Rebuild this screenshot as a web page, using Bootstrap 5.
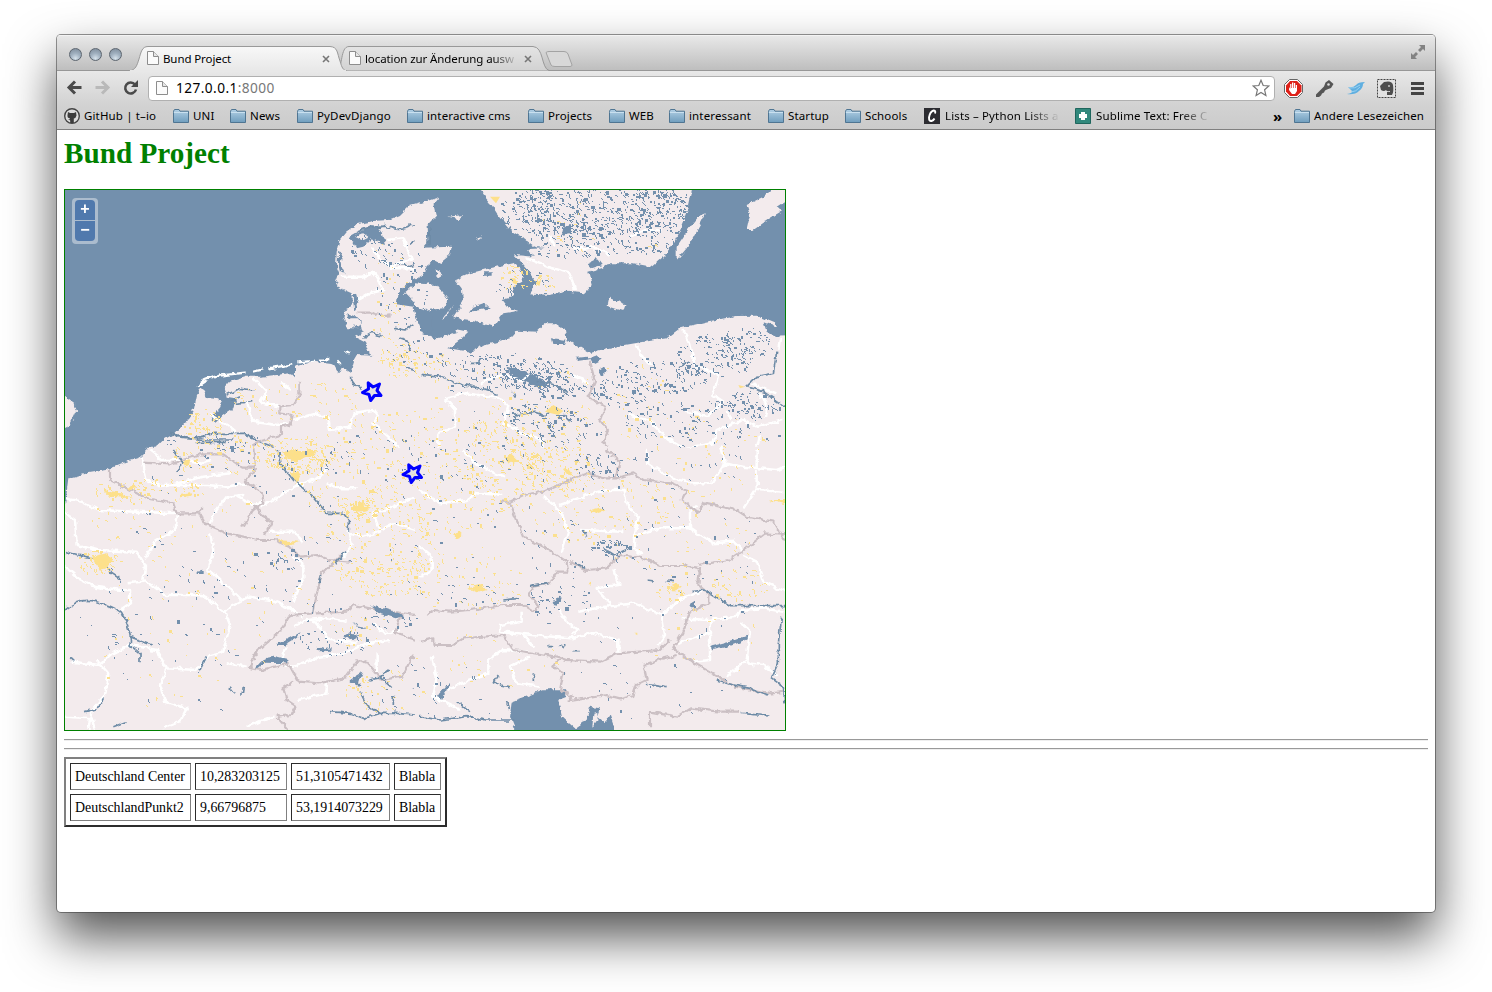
<!DOCTYPE html>
<html lang="de">
<head>
<meta charset="utf-8">
<title>Bund Project</title>
<link href="https://cdn.jsdelivr.net/npm/bootstrap@5.3.0/dist/css/bootstrap.min.css" rel="stylesheet">
<script src="https://cdn.jsdelivr.net/npm/bootstrap@5.3.0/dist/js/bootstrap.bundle.min.js"></script>
<style>
body{background:#fff;overflow:hidden;height:992px;color:#000}
svg{display:block;flex:none}
.browser{width:1378px;height:877px;margin:35px 0 0 57px;border-radius:4px;background:#fff;box-shadow:0 0 0 1px rgba(60,60,60,.55),0 25px 50px rgba(0,0,0,.68);overflow:hidden}
.chrome-ui{font-family:"Noto Sans",sans-serif;font-size:11.5px;line-height:16px;white-space:nowrap}
.strip{height:36px;background:linear-gradient(#e9e9e9,#bdbdbd);box-shadow:inset 0 1px #f3f3f3}
.strip-shapes{left:0;top:0}
.lights{width:90px;padding:13px 0 0 12px;gap:7px}
.light{width:13px;height:13px;border-radius:50%;border:1px solid #5d6670;background:radial-gradient(circle at 50% 85%,#d7e3ec 0,#a1b1c0 45%,#7b8998 100%)}
.tab-a{width:202px;padding-top:16px}
.tab-b{width:190px;padding-top:16px}
.tab-label{margin-left:4px;width:155px;letter-spacing:-.1px}
.fade-a{-webkit-mask-image:linear-gradient(90deg,#000 82%,transparent 99%)}
.toolbar-row{height:34px;background:linear-gradient(#e8e8e8,#d2d2d2)}
.omni{width:1127px;height:25px;margin-left:9px;border:1px solid #b0b0b0;border-radius:4px;background:#fff;padding:0 4px 0 7px;font-size:13.7px;letter-spacing:.42px}
.omni .rest{color:#777}
.marks{height:25px;background:linear-gradient(#d2d2d2,#cbcbcb);border-bottom:1px solid #808080;display:grid;grid-template-columns:109px 57px 67px 110px 121px 81px 60px 99px 77px 79px 151px 198px 21px 1fr;padding:0 0 2px 7px;align-items:center;letter-spacing:.14px}
.bm{display:flex;align-items:center;gap:4px}
.bm b{font-size:15px;line-height:10px}
.fade-b{gap:5px}
.fade-b span{width:116px;-webkit-mask-image:linear-gradient(90deg,#000 72%,transparent 99%)}
.page-body{padding:6px 7px 0;font-family:"Liberation Serif",serif;font-size:13.9px;line-height:16px}
.page-body h1{font-size:29.2px;line-height:34px;font-weight:bold;color:green;margin:0 0 19px}
.map-box{width:722px;height:542px;border:1px solid green}
.zoomer{left:7px;top:8px;width:26px;height:46px;padding:2px 3px;background:rgba(255,255,255,.4);border-radius:4px;gap:1px;font:bold 16px/18px "Liberation Sans",sans-serif}
.zoomer span{width:20px;height:20px;background:#5079ad;color:#fff;text-align:center}
.zoomer span:first-child{border-radius:4px 4px 0 0}
.zoomer span:last-child{border-radius:0 0 4px 4px}
.rule{height:2px;border-top:1px solid #999;border-bottom:1px solid #eee;margin-bottom:7px}
.places{width:383px;border:2px solid;border-color:#808080 #2d2d2d #2d2d2d #808080;border-collapse:separate;border-spacing:4px;table-layout:fixed}
.places td{height:27px;padding:1px 0 0 4px;border:1px solid;border-color:#2c2c2c #808080 #808080 #2c2c2c;white-space:nowrap}
.l{fill:#f3ebed}
.w{fill:#7390ad}
.wb{fill:none;stroke:#fff;stroke-width:7.5;stroke-linejoin:round}
.nb{fill:none;stroke:#cbc0c4;stroke-width:6.5;stroke-linejoin:round}
.rv{fill:none;stroke:#6d8ba6;stroke-width:5;stroke-linejoin:round}
.y{fill:#fde08a}
</style>
</head>
<body>
<svg width="0" height="0" class="position-absolute">
<defs>
<linearGradient id="fg" x2="0" y2="1"><stop stop-color="#b2d0e5"/><stop offset="1" stop-color="#6f9dbd"/></linearGradient>
<linearGradient id="t1" x2="0" y2="1"><stop stop-color="#f8f8f8"/><stop offset="1" stop-color="#e8e8e8"/></linearGradient>
<linearGradient id="t2" x2="0" y2="1"><stop stop-color="#e4e4e4"/><stop offset="1" stop-color="#d2d2d2"/></linearGradient>
<symbol id="folder" viewBox="0 0 16 14"><path d="M.5 3.5V2.2L1.5.5H6l1 1.7h8.5v11.3H.5z" fill="url(#fg)" stroke="#4f7592"/><path d="M1 3.5h14" stroke="#c9e0ef"/></symbol>
<symbol id="sheet" viewBox="0 0 12 14"><path d="M.5.5h6l5 5v8H.5z" fill="#fbfbfb" stroke="#8d8d8d"/><path d="M6.5.5v5h5" fill="#e6e6e6" stroke="#8d8d8d"/></symbol>
<symbol id="cross" viewBox="0 0 8 8"><path d="M1 1l6 6M7 1L1 7" stroke="#777" stroke-width="1.6"/></symbol>
</defs>
</svg>
<div class="browser">
<div class="chrome-ui">
 <div class="strip d-flex position-relative">
  <svg class="strip-shapes position-absolute" width="1378" height="36">
   <path d="M0 35.5H1378" stroke="#979797"/>
   <path d="M280 35.5C286 33 283 11.500 292 11.500H476C487 12 484 33 492 35.500" fill="url(#t2)" stroke="#999"/>
   <path d="M72 36C79 35 80 30 82 24C84 17 85 11.500 91 11.500H273C281 12 280 18 283 26C285 33 286 35 290 36" fill="url(#t1)" stroke="#999"/>
   <path d="M73 36H289" stroke="#e8e8e8" stroke-width="2"/>
   <path d="M489 17.500Q490 16.500 492 16.500H507Q510 16.500 511 19L515 30Q515 31.500 513 31.500H498Q495 31.500 494 30Z" fill="#d8d8d8" stroke="#a3a3a3"/>
   <path d="M1368 10v6l-2-2-3 3-2-2 3-3-2-2zM1354 24v-6l2 2 3-3 2 2-3 3 2 2z" fill="#828282"/>
  </svg>
  <div class="lights d-flex position-relative"><i class="light"></i><i class="light"></i><i class="light"></i></div>
  <div class="tab-a d-flex position-relative"><svg width="12" height="14" class="mt-0"><use href="#sheet"/></svg><span class="tab-label">Bund Project</span><svg width="8" height="8" class="mt-1 ms-1"><use href="#cross"/></svg></div>
  <div class="tab-b d-flex position-relative"><svg width="12" height="14"><use href="#sheet"/></svg><span class="tab-label fade-a">location zur Änderung ausw</span><svg width="8" height="8" class="mt-1 ms-1"><use href="#cross"/></svg></div>
 </div>
 <div class="toolbar-row d-flex align-items-center">
  <svg width="82" height="24" viewBox="57 77 82 24" fill="none"><path d="M81.500 88.500H70M75 82.500l-6 6 6 6" stroke="#4a4a4a" stroke-width="3"/><path d="M95.500 88.500H107M102 82.500l6 6-6 6" stroke="#b9b9b9" stroke-width="3"/><path d="M135 85.500a5.500 5.500 0 1 0 1 5" stroke="#4a4a4a" stroke-width="2.600"/><path d="M138 81v7h-7z" fill="#4a4a4a"/></svg>
  <div class="omni d-flex align-items-center"><svg width="12" height="14" class="me-2"><use href="#sheet"/></svg><span>127.0.0.1<span class="rest">:8000</span></span>
   <svg class="ms-auto" width="18" height="18" viewBox="0 0 18 18"><path d="M9 1.200l2.200 5.300 5.600.5-4.200 3.800 1.300 5.700L9 13.500l-4.900 3 1.300-5.700L1.200 7l5.600-.5z" fill="#fff" stroke="#777" stroke-width="1.200"/></svg></div>
  <svg class="ms-1" width="150" height="24" viewBox="1279 76 150 24"><path d="M1290 79.500h8l5 5v8l-5 5h-8l-5-5v-8z" transform="translate(-.5 0)" fill="#fff" stroke="#666"/><path d="M1290 81h7l4.500 4.500v6l-4.500 4.500h-7l-4-4.500v-6z" fill="#de2119"/><path d="M1289 87v3l3 4h3l2-3v-6h-1.200v3h-.6v-5h-1.300v5h-.6v-5.500h-1.300V88h-.6v-4h-1.200v5z" fill="#fff"/>
   <path d="M1316 94.500l8-8 1.500-4 3.500-2.500 4.500 4-2.500 4-4 1.500-2 1-1 2-2 1-1 2-2 1.500h-3z" fill="#555"/><circle cx="1328.500" cy="84.500" r="1.300" fill="#ddd"/>
   <path d="M1347 94q6-1 5-3l-4-4q5 1 8-2 2-3 9-3l-2 2q0 4-4 7-4 4-12 3z" fill="#60afe0"/><path d="M1349 88q6 1 11-3M1351 92q5 0 9-5" stroke="#9ad2f2" fill="none"/>
   <rect x="1377.500" y="79.500" width="18" height="18" fill="#e2e2e2" stroke="#444" stroke-dasharray="2 1"/><path d="M1380 86l4-4q8-2 9 3 1 7-1 10h-5v-3h3v-1q-3 1-4-1-2 2-5 0z" fill="#4d4d4d"/><path d="M1388 86h2" stroke="#fff"/>
   <path d="M1411 83.500h13M1411 88.500h13M1411 93.500h13" stroke="#444" stroke-width="3"/></svg>
 </div>
 <div class="marks">
  <div class="bm"><svg width="16" height="16" viewBox="0 0 16 16"><circle cx="8" cy="8" r="7.300" fill="#ddd" stroke="#444" stroke-width="1.400"/><path d="M4 4l2 1h4l2-1 .5 3.500Q12 10 9.800 10.500v4.500H6.200v-2.500L4 11l2 .2v-.7Q3 10 3.500 7z" fill="#3d3d3d"/></svg><span>GitHub | t–io</span></div>
  <div class="bm"><svg width="16" height="14"><use href="#folder"/></svg><span>UNI</span></div>
  <div class="bm"><svg width="16" height="14"><use href="#folder"/></svg><span>News</span></div>
  <div class="bm"><svg width="16" height="14"><use href="#folder"/></svg><span>PyDevDjango</span></div>
  <div class="bm"><svg width="16" height="14"><use href="#folder"/></svg><span>interactive cms</span></div>
  <div class="bm"><svg width="16" height="14"><use href="#folder"/></svg><span>Projects</span></div>
  <div class="bm"><svg width="16" height="14"><use href="#folder"/></svg><span>WEB</span></div>
  <div class="bm"><svg width="16" height="14"><use href="#folder"/></svg><span>interessant</span></div>
  <div class="bm"><svg width="16" height="14"><use href="#folder"/></svg><span>Startup</span></div>
  <div class="bm"><svg width="16" height="14"><use href="#folder"/></svg><span>Schools</span></div>
  <div class="bm fade-b"><svg width="16" height="16"><path d="M0 0h16v16H0z" fill="#2c2c31"/><path d="M11 5.500q1-3-1.500-3Q6 3.500 5 9.500q0 4 2.500 3.500 2-.5 3-2.500" fill="none" stroke="#fff" stroke-width="1.900"/></svg><span>Lists – Python Lists a</span></div>
  <div class="bm fade-b"><svg width="16" height="16"><path d="M.5.5h15v15H.5z" fill="#31887c" stroke="#1f665d"/><path d="M6 4h4v2h2v4h-2v2H6v-2H4V6h2z" fill="#fff"/></svg><span>Sublime Text: Free C</span></div>
  <div class="bm"><b>»</b></div>
  <div class="bm"><svg width="16" height="14"><use href="#folder"/></svg><span>Andere Lesezeichen</span></div>
 </div>
</div>
<main class="page-body">
<h1>Bund Project</h1>
<div class="map-box position-relative">
<svg width="720" height="540" viewBox="65 190 720 540">
<defs><filter id="rough" filterUnits="userSpaceOnUse" x="55" y="180" width="740" height="560"><feTurbulence type="fractalNoise" baseFrequency=".16" numOctaves="3" seed="4"/><feDisplacementMap in="SourceGraphic" scale="5.500" xChannelSelector="R" yChannelSelector="G"/></filter></defs>
<path class="w" d="M65 190h720v540H65z"/>
<g filter="url(#rough)">
<!-- north west: North Sea coast, Jutland -->
<g transform="translate(60 185) scale(.33333)">
<path class="l" d="M1080 52L1050 60 1020 90 985 105 940 108 890 118 858 140 838 165 830 200 828 240 838 265 825 300 860 318 875 325 875 365 855 375 850 400 862 430 890 430 915 440 885 455 915 470 925 500 940 512 890 510 878 530 870 560 845 545 835 565 820 538 760 530 705 545 705 580 690 565 650 570 600 575 560 575 510 590 493 610 500 635 530 640 520 670 490 690 465 715 455 700 485 665 475 640 440 635 425 610 412 625 400 680 375 715 345 745 310 765 290 785 258 800 230 830H1125V460L1080 445z"/>
<path class="l" d="M1040 310L1110 293V390L1065 352 1035 326z"/>
<path class="l" d="M0 625L15 635 40 655 48 680 30 720 0 735z"/>
<path d="M412 605Q430 580 480 572L560 562M580 560l30-7M625 550l75-12M715 532l50-5M780 525l25-3M832 530l10 10M860 500l10 5" fill="none" stroke="#fff" stroke-width="7"/>
<path class="w" d="M865 160L900 140 935 120 955 125 965 145 975 180 960 175 935 160 910 185 890 190 880 170zM835 195l10 15-3 30 12 25-15-8-6-30zM890 325l8 28-15 25-5-45zM860 385l40 15 5 35-20-5-5-25-20-5zM1115 220L1098 240 1098 262 1045 295 1015 325 1010 358 1060 365 1070 400 1085 435 1115 445V385L1060 350 1035 325 1060 303 1115 293z"/>
<path class="l" d="M885 155l25-10 15 10-20 10zM870 400l25 0 8 20-15 5z"/>
<path class="rv" d="M890 140Q950 115 990 128T1050 120L1095 130M1090 190l15-20M1110 130v50M1050 175l30-12M975 120l-20 10M1000 240l30-5 20 10 30-10M1005 430l30 5 25-15M910 460l25-15 30 8M1015 460l30 10 5 25M1040 550l60 12M875 575v20l30 15M500 630l40-20 40 5M510 650l30-15M525 655l55-5M330 745L400 760 465 745 550 745 600 770 650 790 660 810M350 755l90 10h80M410 772h90"/>
<path class="wb" d="M935 190l20 25 40 30 60-25-25-60-50 5M990 250l60 0 30 10M845 275h60l40-10 25 50-40 10-35 20M580 580l40 40-20 30 60 15 25-2M690 615l-30-25M560 650l20 60 70 10 35-5M700 705l70-20 35 15 5 35 60-10 10-40 60-10 15 20-15 20 45 40 35 35M450 690l50 30 30 25"/>
<path class="nb" d="M890 383l40 0 40 10 25-2M718 590l0 40-20 30-40 5v20l40 5-5 25-30 10 0 25-60 15-25 15"/>
</g>
<!-- north east: Denmark, Sweden, Pomerania -->
<g transform="translate(420 185) scale(.33333)">
<path class="l" d="M-15 60L60 35 40 60 48 95 20 125 22 175 10 188 95 185 90 210 60 235 40 225 20 240 10 270-15 285zM-15 295L50 300 85 345 70 370 20 375-15 365zM65 405L100 355 75 400zM105 285L150 265 210 250 280 235 300 250 310 290 280 305 280 335 245 345 260 365 295 378 250 385 220 425 170 410 130 405 100 395 130 350 125 310zM165 0L215 60 240 100 270 135 310 160 345 185 375 190 330 192 325 200 345 215 285 210 320 250 350 290 330 325 385 330 440 320 495 325 515 300 505 260 545 250 570 235 640 235 695 245 730 215 765 170 790 115 805 70 820 0zM770 225V185L800 140 835 95 858 85 840 120 800 190zM1115 5H1060L1030 35 980 60 990 90 980 135H1000L1050 100 1090 75 1070 65 1115 35zM565 338l52 20-7 20-50-16zM85 95l45-5-15 12zM168 160l18-3-10 8zM50 255l18 15-15 10z"/>
<path class="l" d="M-15 435L50 460 110 445 105 432 145 440 120 465 85 490 150 500 180 485 270 460 290 437 350 440 375 415 405 415 435 435 440 465 505 505 560 490 670 470 740 460 780 430 860 410 950 393 1010 392 1065 415 1068 425 1030 410 1040 440 1060 452 1125 450V830H-15z"/>
<path class="w" d="M395 460l45 5-5 15-35 0zM470 518l30-3 10 8-40 5zM510 520l20-8 15 12-25 12zM535 555l15-8 12 12-18 14zM160 365l30-10 20 15-60 10zM195 262l20 0 0 10-20 0zM260 545l60 15 55 30-15 20-45-20-50-25zM430 130l20-10 0 25-25 5zM500 235l30-15 15 20-30 10z"/>
<path class="wb" d="M390 150l10 35M320 220l60 25 70 20 15 50M460 190h70l40 20M625 155l50-20h50M650 480l20 40 25 20M790 435l20 40 15 65 70 30-15 60 30 20-45 40-70-10M1080 460l-5 35M1000 595l40 20 30 10M180 600l25-20 50-10 50 15 25-15M455 570l30 10 20 20M75 640l60-15 110 15 20 25-15 50 60 30 60 20-10 35M75 640l30 35 0 50-50 20 0 40 40 20M625 690l70 20 45 50 50 30 90-15 10-40 80-30 40 20 80-20M920 680l15 25M1020 750l-15 60M1020 625l20 30-5 40"/>
<path class="nb" d="M510 530l15 60-20 45 50 30-15 40 25 35-15 30 30 45"/>
<path class="rv" d="M0 568l60 5 50 20 60 15 60 20M1070 500l-10 65-50 10-30 30 50 15 65 45M285 690l60-8 30 10 25-15M430 690l20 20M150 535h20l15-15M280 620l5 20M780 545l30-15M350 590l60 10 30 25"/>
</g>
<!-- south west: Benelux, France, Switzerland -->
<g transform="translate(60 450) scale(.33333)">
<path class="l" d="M0 165L15 165 25 85 80 70 140 60 200 35 255 18 265-10H1125V860H0z"/>
<path class="wb" d="M15 145l50 10 50 25 110 5 130 5-10 50-60 35-30 50M15 190l30 20 5 75 60 15 120 5 25 40-5 50-50 5M15 350l40 35 50 25 80 10 25 0 0 40-30 20M255 390l60 45 110 0 70 50 25-20 50-25 60 10 60 25 40 25M450 250l10 50-15 60 70 60 30 30M495 485l15 40-20 80-40 10-40 45-90-5-30-55-80-15-60 30-30 30-85-10M320 655l-20 50 15 50 65 20-20 40-50 20M110 630l35 40-10 65-40 45-10 60M15 800l80 5 10 35M500 640l60 10M245 20l15 70 50 20 60-15 60-15 80-10M290 105h150l60 5 60-10M270 0l40 30 50 0 60 10 30-10M600 170l40-20 40-25 40-20 60-25 20-25M450 220l20-40 30-40 50-5M530 140l40 20 15 5 25-15M630 245l70 0 30 30M700 320l30 20 0 45-30 70M870 250l5 35-25 35M860 245l50 15 50-15-20-55 50-15 60-30 60-10M1110 375l-35 10 5 80-10 30M960 240l40-20 100 30M700 530l40-20 60-5 60 10M760 510l50 60 80 10M990 570l-70 10-70 30-70 10-80 30-40-10 20-50M950 610l0 60M940 520l30 30 50-10M800 700l0 30-85 20M560 830l80-30M800 100l40 15 50 0"/>
<path class="nb" d="M150 60l0 30 50 25 60 30 80 15 10 30 70 0 10 30 70 30 50 10 40 10 50 0 50 20 30 30 50-5 40 15 60 5M430 170l-20 20M250 38l80 5 90-30 70 0 60 40 35 0-5-60M585 55l-30 40 50 30 5 30-35 30-30 50M585 165l20 30 30 20-20 40M840 318l-55 55-15 60-10 60M770 490l90-5 20-20 50 10 100 15 40 5 20 30 30-5M1020 500l-15 50 80 25 25-5M760 490l-70 5-30 50-70 60-20 50 35 5 80-20 30 55 60 5 80-15 40-55 30 10 40 50 60-10 30-60 60 10 60-30M700 695l-30 20 10 35 30 20-15 25-45 5 40 45"/>
<path class="rv" d="M15 480Q60 440 110 455T180 485Q200 510 207 540T210 585l30 25 0 30M210 560l65 25M15 305l40 10 50 10 30 20 20 25 30 20M655 0l5 40 40 50 60 50 40 50 50 0 15 20 0 35M855 305l-30 35M785 375l-8 25M762 460l-2 30M340 0l30 40-20 20M440 620l-20 40M30 625l10 10M160 830l40-15M130 745l-15 30-40 10M510 710l15 20M550 710l-5 30M900 725l20 40 40 25 50 0 100 10M810 785l60 5 40 15 50-15M895 700l10-35M870 690l30 15M925 690l30-5 30-25M960 680l35 30M1000 740l0 25"/>
<path class="w" d="M585 655Q610 620 640 620L682 630V640L620 638 595 657zM645 585l45-22 32-18-8 15-40 25zM930 465l40 10 60 20-20 10-50-15zM770 590l25 8 20-3v7l-40 2zM850 560l25-15 20 15-20 10zM880 515l20 15 25 5-25 3zM410 365l18-3 0 10-18 0zM1060 715l15-10 0 15zM870 690l40-25-20 45z"/>
<path class="y" d="M665 8l30-8 75 0-5 15-30 10-25 10-25-10zM95 320l45-10 15 20-15 25-20 5-15-20zM135 125l50 5 35 15-75-5zM200 115l20-10 10 10-20 5zM360 135l30-5 5 10-35 5zM870 175l30-15 40 15-40 10zM650 270l70 5-40 15zM370 35l20-5-10 20zM690 70l20-10 10 15-10 30z"/>
</g>
<!-- south east: Bavaria, Bohemia, Alps, Adriatic -->
<g transform="translate(420 450) scale(.33333)">
<path class="l" d="M-15-10H1125V860H-15z"/>
<path class="w" d="M290 850L270 800 275 755 330 735 370 718 435 718 440 740 415 750 425 800 465 835 500 810 510 770 540 775 530 800 555 820 570 795 582 830V850zM85 700l5 5-20 30-3 15-20-3 10-15zM870 590l60-15 50-18 7 10-55 20-55 14zM820 450l-10 25 15 0 0-25zM395 465l20-25 10 5-12 22z"/>
<path class="l" d="M520 790l12-5 0 30-15 15zM545 790l15 0 0 25-10-10z"/>
<path class="wb" d="M130 0l35 40 60 30 30 10M0 120l60 40 80-10 30-20 80 5M0 290l35 30 0 40-35 20M370 140l50 40 25 60-20 70M420 165l80-30 60-15 50 0 15 50 30 30-10 50 0 45 20 20M480 240l130 5M640 260l80-25 90 0 30 20 40 25 60-5 30 30M810 235l0-50 20-20M680 0l5 40 60 40 70 20 60 0 40-60-15-50M910 40l60 10 100 10 25-10M1010 0l0 115-40 60M1010 120l80 5M970 315l40 20 20 60 65 30M580 360l15 45-65 10 40 45-10 15M475 485l80-15 90-10 80 35 10 60-20 30M415 480l20 30 40 30-20 15M255 545l80 10 120 10 60-15 80 20 0 35M305 485l0 30-65 10 0 20 70 10 30 35M725 495l60-50 60-20M785 505l80 5 85-10 10-20 70-5 60 10M870 510l0 40-95 30M960 520l30 20-10 90-60 50M980 640l50 5 40 30M870 555l0 75-50 5M35 620l15 60-10 60 80 40M85 720l60-30 60-20 0-40 40-30 80 5M330 620l-60 30 20 50 70 10"/>
<path class="nb" d="M240 155l30 0 40-20 60-10 80-35 50-20 50 15 40 0 50-15 30 20 80 10 50 20-15 30 50 40 15-30 100 20 30 20 80 15 30 50 30 10M560 0l40 35-15 50M270 160l20 50 20 50 70 35 60 40 5 30-35 0-20 35-50 10-15 20 30 40-10 15-35-20-60 0-100 15-60 5-50-5-20 15M450 335l50 25 60-5 40-40 70 10 50 20 70 0 50 10-5 50 30 25 0 30-55 25-20 60-30 50 55 40 70 40 60 35 110 20 40-5M835 345l90-15 60-40 50-40 60 5M0 575l40-10 0 20 60 0 30-20 120-10 30 45 130 20 30 10 100 5 50-25 130-10 30-30M420 620l-20 30 30 20-10 50 40 20-10 10M440 755l120-20 40 10 40-10 10-30 30-15-10-45 60-20 40-10M690 835l0-50 80 15 40-25 90 10 60 0"/>
<path class="rv" d="M815 425l40-5 40 25 40 22 160 0M1085 500l-10 80 0 60-20 45 35 25 5 50M890 690l50 15 50 10 55 20M0 800l60 10 80-10 60 10 80 0M330 410l60-10M235 675l-15 20 20 10 30 5M340 670l0 25M680 390l25 3M740 393l20 2M680 700l60 10M965 790l80 8M550 295l30 20 50-20M470 340l25 15M490 240l10 20M110 755l40 30M260 755l5 25M385 590l15 0M420 585l15 5M460 605l20 0M250 450l45-5"/>
<path class="y" d="M510 180l35-8 10 10-30 10zM95 255l25-8 10 10-20 8zM145 415l35-10 20 12-30 10zM750 410l25-12 10 12-20 15zM1045 150l50 0v12zM255 20l20-8 15 15-20 15zM430 55l30 10-10 15zM505 395l8-5 0 15zM640 548l12 0 0 8z"/>
</g>
</g>
<g transform="translate(420 185) scale(.33333)" class="y"><path d="M375 680l25-20 30 18-15 12zM210 35l30 0-12 20zM345 295l18-10-5 18zM270 280l15 0 10 20-15-5zM58 508l15 0-5 10zM955 600l20 5-15 5z"/></g>
<path id="yellowSpecks" fill="#fbe08e"/><path id="lakeSpecks" fill="#7390ad"/>
<g id="pins" fill="#ddd" fill-opacity=".7" stroke="#00f" stroke-width="3" stroke-linejoin="round"><path id="pin" d="M368.200 382.800L373 387 379.500 384 377 390.500 381 395.500 374.500 395.500 370.700 400.500 369 394.500 362.500 392.500 368.500 389z"/><use href="#pin" x="40.500" y="82"/></g>
</svg>
<div class="zoomer position-absolute d-flex flex-column"><span>+</span><span>−</span></div>
</div>
<div class="rule mt-2"></div><div class="rule"></div>
<table class="places"><colgroup><col width="121"><col width="92"><col width="99"><col width="47"></colgroup>
<tr><td>Deutschland Center</td><td>10,283203125</td><td>51,3105471432</td><td>Blabla</td></tr>
<tr><td>DeutschlandPunkt2</td><td>9,66796875</td><td>53,1914073229</td><td>Blabla</td></tr></table>
</main>
</div>
<script>
// Scatter lakes and towns over the land areas: [centre x, centre y, radius x, radius y, count]
let seed = 7;
const rnd = () => (seed = (seed * 16807) % 2147483647) / 2147483647;
function scatter(id, areas, max) {
  let d = '';
  for (const [cx, cy, rx, ry, n] of areas) for (let i = 0; i < n; i++) {
    const a = rnd() * 6.283, r = Math.sqrt(rnd());
    const x = Math.round(cx + rx * r * Math.cos(a)), y = Math.round(cy + ry * r * Math.sin(a));
    const w = 1 + Math.floor(rnd() * rnd() * max), h = 1 + Math.floor(rnd() * rnd() * max);
    d += `M${x} ${y}h${w}v${h}h-${w}z`;
    if (rnd() > .6) d += `M${x + w} ${y + h}h1v1h-1z`;
  }
  document.getElementById(id).setAttribute('d', d);
}
scatter('lakeSpecks', [[600,208,88,26,430],[525,212,28,24,90],[660,205,30,24,90],[610,235,70,22,200],[570,240,55,18,60],[520,285,30,18,40],
 [535,374,38,16,130],[500,366,50,14,60],[550,385,35,14,90],[660,375,48,18,120],[715,355,38,22,110],[745,345,30,18,60],[620,390,30,16,60],
 [745,405,38,14,90],[670,420,50,18,60],[540,415,40,12,60],[560,430,45,15,50],[600,465,30,14,40],[700,440,80,40,60],[475,375,45,20,40],
 [420,350,35,15,30],[400,290,28,38,40],[370,250,25,18,30],[400,265,20,30,25],[610,548,20,9,50],[330,642,40,14,40],[560,600,40,14,30],[285,560,14,12,20],
 [390,620,28,8,18],[460,595,45,12,20],[350,520,230,90,110],[640,560,130,90,80],[200,620,120,95,80],[440,690,80,30,30],[270,460,90,20,40],[210,440,50,10,20],[460,450,120,40,70],[640,690,100,30,20]], 4);
scatter('yellowSpecks', [[420,470,130,65,420],[300,455,35,20,150],[230,455,60,20,90],[203,425,20,16,60],[380,540,55,55,190],[400,355,22,14,50],[410,365,40,14,40],
 [385,575,45,22,70],[360,508,18,10,60],[530,430,60,35,120],[560,470,35,25,120],[500,470,40,30,70],[470,580,55,35,70],[150,490,60,12,80],[98,562,22,12,60],
 [600,510,75,35,80],[680,540,70,50,60],[690,450,75,50,60],[360,630,35,16,25],[380,690,45,22,45],[740,585,30,18,45],[670,590,15,10,20],
 [515,278,15,14,35],[545,282,13,8,15],[385,290,22,50,30],[240,560,150,60,60],[180,660,90,60,30],[560,390,130,35,60],[600,230,70,30,15],[290,400,70,22,60],[480,660,80,28,25],[700,640,60,40,20],[130,520,50,20,20]], 4);
</script>
</body>
</html>
